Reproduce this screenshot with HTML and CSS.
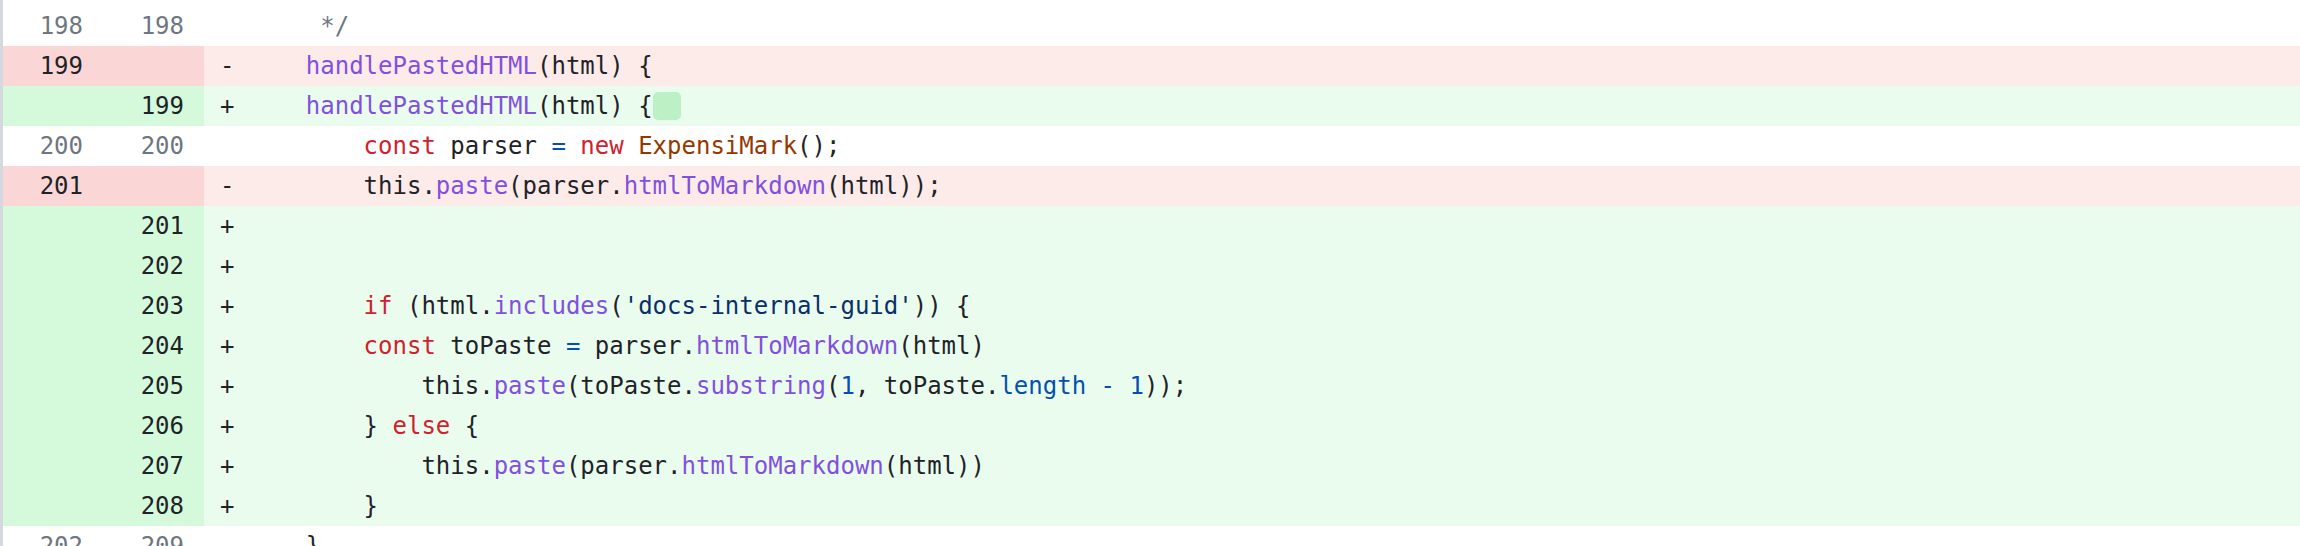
FILE: index.html
```html
<!DOCTYPE html>
<html lang="en">
<head>
<meta charset="utf-8">
<title>Diff</title>
<link rel="stylesheet" href="styles.css">
</head>
<body>
<div class="diff">
  <div class="row ctx"><span class="num">198</span><span class="num">198</span><span class="code"><span class="mk"> </span><span class="c">     */</span></span></div>
  <div class="row del"><span class="num">199</span><span class="num"></span><span class="code"><span class="mk">-</span>    <span class="f">handlePastedHTML</span>(html) {</span></div>
  <div class="row add"><span class="num"></span><span class="num">199</span><span class="code"><span class="mk">+</span>    <span class="f">handlePastedHTML</span>(html) {<span class="hl">  </span></span></div>
  <div class="row ctx"><span class="num">200</span><span class="num">200</span><span class="code"><span class="mk"> </span>        <span class="k">const</span> parser <span class="o">=</span> <span class="k">new</span> <span class="e">ExpensiMark</span>();</span></div>
  <div class="row del"><span class="num">201</span><span class="num"></span><span class="code"><span class="mk">-</span>        this.<span class="f">paste</span>(parser.<span class="f">htmlToMarkdown</span>(html));</span></div>
  <div class="row add"><span class="num"></span><span class="num">201</span><span class="code"><span class="mk">+</span></span></div>
  <div class="row add"><span class="num"></span><span class="num">202</span><span class="code"><span class="mk">+</span></span></div>
  <div class="row add"><span class="num"></span><span class="num">203</span><span class="code"><span class="mk">+</span>        <span class="k">if</span> (html.<span class="f">includes</span>(<span class="s">'docs-internal-guid'</span>)) {</span></div>
  <div class="row add"><span class="num"></span><span class="num">204</span><span class="code"><span class="mk">+</span>        <span class="k">const</span> toPaste <span class="o">=</span> parser.<span class="f">htmlToMarkdown</span>(html)</span></div>
  <div class="row add"><span class="num"></span><span class="num">205</span><span class="code"><span class="mk">+</span>            this.<span class="f">paste</span>(toPaste.<span class="f">substring</span>(<span class="o">1</span>, toPaste.<span class="o">length</span> <span class="o">-</span> <span class="o">1</span>));</span></div>
  <div class="row add"><span class="num"></span><span class="num">206</span><span class="code"><span class="mk">+</span>        } <span class="k">else</span> {</span></div>
  <div class="row add"><span class="num"></span><span class="num">207</span><span class="code"><span class="mk">+</span>            this.<span class="f">paste</span>(parser.<span class="f">htmlToMarkdown</span>(html))</span></div>
  <div class="row add"><span class="num"></span><span class="num">208</span><span class="code"><span class="mk">+</span>        }</span></div>
  <div class="row ctx"><span class="num">202</span><span class="num">209</span><span class="code"><span class="mk"> </span>    }</span></div>
</div>
</body>
</html>
```

FILE: styles.css
```css
html, body {
  margin: 0;
  padding: 0;
  background: #ffffff;
  height: 546px;
  overflow: hidden;
}

.diff {
  border-left: 3px solid #d5d9de;
  padding-top: 6px;
  font-family: "DejaVu Sans Mono", "Liberation Mono", monospace;
  font-size: 24px;
  line-height: 40px;
  color: #1f2328;
  min-height: 600px;
}

.row {
  display: grid;
  grid-template-columns: 100px 101px 1fr;
  height: 40px;
}

.num {
  text-align: right;
  padding-right: 20px;
  color: #6e7781;
}

.code {
  white-space: pre;
  padding-left: 16px;
}

.mk {
  display: inline-block;
  width: 28px;
}

.del .num { background: #fad7d6; color: #1f2328; }
.del .code { background: #fcebe9; }
.add .num { background: #d5fadb; color: #1f2328; }
.add .code { background: #eafcee; }

.hl {
  background: #bcf0c5;
  border-radius: 5px;
}

.c { color: #6e7781; }
.k { color: #cf222e; }
.f { color: #8250df; }
.e { color: #953800; }
.o { color: #0550ae; }
.s { color: #0a3069; }
```
